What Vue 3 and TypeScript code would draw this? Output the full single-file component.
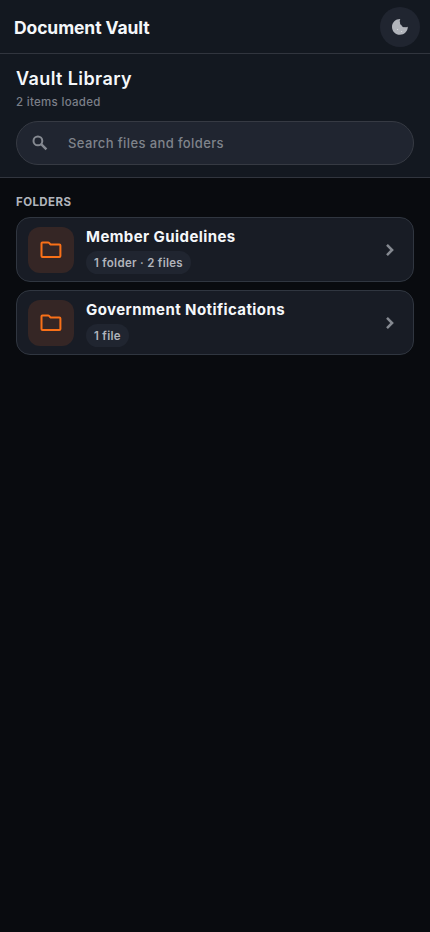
<script setup lang="ts">
interface Folder {
  name: string
  summary: string
}

const folders: Folder[] = [
  { name: 'Member Guidelines', summary: '1 folder · 2 files' },
  { name: 'Government Notifications', summary: '1 file' },
]
</script>

<template>
  <div class="screen">
    <header class="topbar">
      <h1 class="app-title">Document Vault</h1>
      <button class="theme-toggle" type="button">
        <svg width="18" height="18" viewBox="0 0 18 18">
          <path d="M9.3 1C4.7.9 1 4.5 1 8.9s3.5 7.9 7.9 7.9 7.9-3.5 7.9-8c-.9.4-1.9.5-2.9.1-.7.4-1.6.4-2.3-.1-.7-.5-1.1-1-1.2-1.7C9.3 6.500 8.900 5.600 9.100 4.700 8.600 3.500 8.700 2.200 9.300 1z" fill="#b1b4bb" />
          <circle cx="6.6" cy="11.5" r=".6" fill="#dfe1e5" />
          <circle cx="10.6" cy="13.5" r=".6" fill="#dfe1e5" />
        </svg>
      </button>
    </header>
    <section class="library">
      <h2 class="library-title">Vault Library</h2>
      <p class="library-count">2 items loaded</p>
      <label class="search">
        <svg width="18" height="18" viewBox="0 0 18 18" fill="none" stroke="currentColor" stroke-width="2">
          <circle cx="6.9" cy="6.9" r="4.4" />
          <path d="M10.2 10.2 15.4 15.4" stroke-width="2.4" />
        </svg>
        <input class="search-input" type="text" placeholder="Search files and folders" />
      </label>
    </section>
    <main class="content">
      <h3 class="section-label">FOLDERS</h3>
      <ul class="folder-list">
        <li v-for="folder in folders" :key="folder.name" class="folder-card">
          <span class="folder-icon">
            <svg width="24" height="24" viewBox="0 0 24 24" fill="none" stroke="currentColor" stroke-width="2" stroke-linejoin="round">
              <path d="M3.400 4.500h5.700c.4 0 .7.1 1 .4l1.300 1.500h9c.6 0 1 .4 1 1v10.600c0 .6-.4 1-1 1H3.500c-.6 0-1-.4-1-1V5.400c0-.6.3-.9.9-.9z" />
            </svg>
          </span>
          <div class="folder-info">
            <span class="folder-name">{{ folder.name }}</span>
            <span class="folder-summary">{{ folder.summary }}</span>
          </div>
          <svg class="chevron" width="22" height="22" viewBox="0 0 22 22" fill="none" stroke="currentColor" stroke-width="2.500">
            <path d="m8 5.900 5.100 5.100L8 16.100" />
          </svg>
        </li>
      </ul>
    </main>
  </div>
</template>

<style>
body {
  background: #090b0f;
}
</style>

<style scoped>
.screen {
  min-height: 100vh;
  background: #090b0f;
  color: #f5f7fa;
  font-family: Inter, "Liberation Sans", sans-serif;
}
h1, h2, h3, p, ul {
  margin: 0;
  padding: 0;
}
.topbar {
  display: flex;
  align-items: center;
  justify-content: space-between;
  box-sizing: border-box;
  height: 54px;
  padding: 0 10px 0 14px;
  background: #131820;
  border-bottom: 1px solid #31353e;
}
.app-title {
  padding-top: 2px;
  font-size: 17.5px;
  line-height: 24px;
  font-weight: 700;
  letter-spacing: -0.1px;
}
.theme-toggle {
  display: flex;
  align-items: center;
  justify-content: center;
  width: 40px;
  height: 40px;
  padding: 0;
  border: 0;
  border-radius: 50%;
  background: #202530;
}
.library {
  box-sizing: border-box;
  height: 124px;
  padding: 12px 16px;
  background: #131820;
  border-bottom: 1px solid #31353e;
}
.library-title {
  font-size: 18px;
  line-height: 26px;
  font-weight: 600;
  letter-spacing: 0.4px;
}
.library-count {
  margin-top: 2px;
  font-size: 11.5px;
  line-height: 16px;
  font-weight: 500;
  letter-spacing: 0.3px;
  color: #7b7f88;
}
.search {
  display: flex;
  align-items: center;
  gap: 19px;
  box-sizing: border-box;
  height: 44px;
  margin-top: 11px;
  padding: 0 14px;
  border: 1px solid #363a43;
  border-radius: 22px;
  background: #202530;
  color: #858991;
}
.search-input {
  flex: 1;
  min-width: 0;
  padding: 0;
  border: 0;
  outline: 0;
  background: transparent;
  color: #f5f7fa;
  font: 500 13px/20px Inter, "Liberation Sans", sans-serif;
  letter-spacing: 0.38px;
}
.search-input::placeholder {
  color: #7f838b;
  opacity: 1;
}
.content {
  padding: 16px;
}
.section-label {
  font-size: 11.5px;
  line-height: 16px;
  font-weight: 700;
  letter-spacing: 0.42px;
  color: #b1b4bb;
}
.folder-list {
  display: flex;
  flex-direction: column;
  gap: 8px;
  margin-top: 7px;
  list-style: none;
}
.folder-card {
  display: flex;
  align-items: center;
  box-sizing: border-box;
  height: 65px;
  padding: 0 12px 0 11px;
  border: 1px solid #303640;
  border-radius: 14px;
  background: #181c25;
}
.folder-icon {
  display: flex;
  align-items: center;
  justify-content: center;
  width: 46px;
  height: 46px;
  border-radius: 12px;
  background: #352625;
  color: #f97018;
}
.folder-info {
  display: flex;
  flex: 1;
  flex-direction: column;
  align-items: flex-start;
  gap: 4px;
  margin-left: 12px;
  padding-top: 2px;
}
.folder-name {
  font-size: 15px;
  line-height: 20px;
  font-weight: 700;
  letter-spacing: 0.42px;
}
.folder-summary {
  box-sizing: border-box;
  height: 23px;
  padding: 0 8px;
  border-radius: 12px;
  background: #202530;
  color: #b1b4bb;
  font-size: 11.5px;
  line-height: 24px;
  font-weight: 600;
  letter-spacing: 0.29px;
}
.chevron {
  color: #858991;
}
</style>
